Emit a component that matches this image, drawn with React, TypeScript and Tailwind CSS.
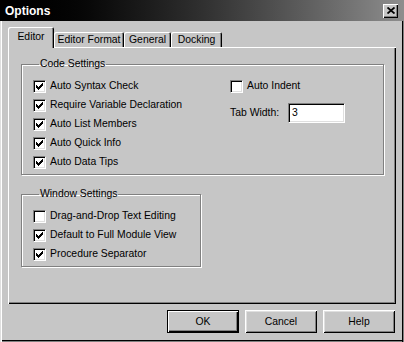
import React from 'react';

const font = "font-['Liberation_Sans',Arial,sans-serif]";

function CheckMark() {
    // classic 7x7 pixel tick
    const px: [number, number, number][] = [
        [6, 0, 1], [5, 1, 2], [0, 2, 1], [4, 2, 3], [0, 3, 2], [3, 3, 3], [0, 4, 5], [1, 5, 3], [2, 6, 1],
    ];
    return (
        <svg width="7" height="7" viewBox="0 0 7 7" shapeRendering="crispEdges">
            {px.map(([x, y, w], i) => (
                <rect key={i} x={x} y={y} width={w} height={1} fill="#000" />
            ))}
        </svg>
    );
}

function Checkbox({ checked, label }: { checked: boolean; label: string }) {
    return (
        <div className="flex h-[19px] items-center">
            <div className="flex h-[13px] w-[13px] items-center justify-center border border-t-[#808080] border-l-[#808080] border-b-white border-r-white bg-white shadow-[inset_1px_1px_0_#000,inset_-1px_-1px_0_#dfdfdf]">
                {checked && <CheckMark />}
            </div>
            <span className="ml-[4px] leading-none">{label}</span>
        </div>
    );
}

function Group({ title, className, children }: { title: string; className: string; children: React.ReactNode }) {
    return (
        <fieldset className={`border border-[#808080] shadow-[1px_1px_0_#fff,inset_1px_1px_0_#fff] ${className}`}>
            <legend className="ml-[6px] px-[1px] leading-[12px]">{title}</legend>
            {children}
        </fieldset>
    );
}

function Button({ label, isDefault }: { label: string; isDefault?: boolean }) {
    return (
        <button
            className={`flex h-[23px] w-[72px] items-center justify-center bg-[#c6c6c6] ${
                isDefault
                    ? 'border border-black shadow-[inset_1px_1px_0_#fff,inset_-1px_-1px_0_#000,inset_-2px_-2px_0_#808080]'
                    : 'shadow-[inset_1px_1px_0_#fff,inset_-1px_-1px_0_#000,inset_2px_2px_0_#dfdfdf,inset_-2px_-2px_0_#808080]'
            }`}
        >
            {label}
        </button>
    );
}

const tabs = [
    { label: 'Editor', w: 'w-[46px]', active: true },
    { label: 'Editor Format', w: 'w-[70px]' },
    { label: 'General', w: 'w-[47px]' },
    { label: 'Docking', w: 'w-[51px]' },
];

export default function App() {
    return (
        <div
            className={`${font} flex h-[342px] w-[404px] flex-col bg-[#c6c6c6] text-[10.4px] text-black shadow-[inset_1px_0_0_#dfdfdf,inset_2px_0_0_#fff,inset_-1px_0_0_#808080,inset_-2px_0_0_#000,inset_0_-1px_0_#808080,inset_0_-2px_0_#000]`}
        >
            {/* title bar */}
            <div className="flex h-[21px] items-center justify-between bg-linear-to-r from-black via-[#303030] to-[#8e8e8e] pl-[5px] pr-[6px]">
                <span className="text-[12px] font-bold text-white">Options</span>
                <div className="flex h-[14px] w-[15px] items-center justify-center bg-[#c6c6c6] shadow-[inset_1px_1px_0_#fff,inset_-1px_-1px_0_#000,inset_-2px_-2px_0_#808080]">
                    <svg width="8" height="7" viewBox="0 0 8 7">
                        <path d="M0.5 0.5 L7.5 6.5 M7.5 0.5 L0.5 6.5" stroke="#000" strokeWidth="1.8" />
                    </svg>
                </div>
            </div>

            {/* tabs */}
            <div className="relative z-10 mt-[6px] flex h-[20px] items-end px-[8px]">
                {tabs.map(t => (
                    <div
                        key={t.label}
                        className={`${t.w} flex items-center justify-center rounded-t-[2px] bg-[#c6c6c6] shadow-[inset_1px_1px_0_#fff,inset_-1px_0_0_#000,inset_-2px_0_0_#808080] ${
                            t.active ? '-mb-[1px] h-[21px] pb-[1px]' : 'h-[15px] pt-[1px]'
                        }`}
                    >
                        {t.label}
                    </div>
                ))}
            </div>

            {/* panel */}
            <div className="mx-[8px] h-[257px] shadow-[inset_1px_1px_0_#fff,inset_-1px_-1px_0_#000,inset_-2px_-2px_0_#808080] pl-[13px] pt-[11px]">
                <Group title="Code Settings" className="h-[117px] w-[363px] pl-[11px] pt-[7px]">
                    <div className="flex">
                        <div className="w-[197px]">
                            <Checkbox checked label="Auto Syntax Check" />
                            <Checkbox checked label="Require Variable Declaration" />
                            <Checkbox checked label="Auto List Members" />
                            <Checkbox checked label="Auto Quick Info" />
                            <Checkbox checked label="Auto Data Tips" />
                        </div>
                        <div className="flex flex-col">
                            <Checkbox checked={false} label="Auto Indent" />
                            <div className="mt-[7px] flex h-[20px] items-center">
                                <span className="w-[58px]">Tab Width:</span>
                                <div className="flex h-[20px] w-[57px] items-center border border-t-[#808080] border-l-[#808080] border-b-white border-r-white bg-white pl-[3px] shadow-[inset_1px_1px_0_#000,inset_-1px_-1px_0_#dfdfdf]">
                                    3
                                </div>
                            </div>
                        </div>
                    </div>
                </Group>

                <Group title="Window Settings" className="mt-[13px] h-[79px] w-[180px] pl-[11px] pt-[7px]">
                    <Checkbox checked={false} label="Drag-and-Drop Text Editing" />
                    <Checkbox checked label="Default to Full Module View" />
                    <Checkbox checked label="Procedure Separator" />
                </Group>
            </div>

            {/* buttons */}
            <div className="mt-[6px] flex justify-end gap-[6px] pr-[9px]">
                <Button label="OK" isDefault />
                <Button label="Cancel" />
                <Button label="Help" />
            </div>
        </div>
    );
}
